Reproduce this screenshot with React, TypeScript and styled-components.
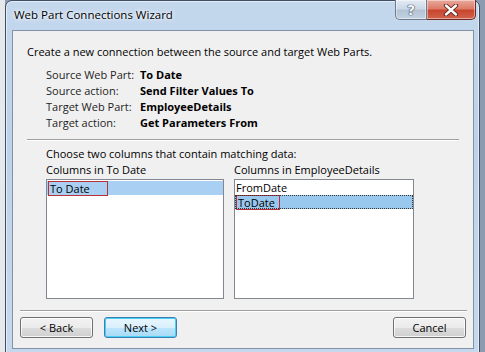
import React from "react";
import styled, { createGlobalStyle } from "styled-components";

const GlobalStyle = createGlobalStyle`
  html, body {
    margin: 0;
    padding: 0;
  }
  body {
    font-family: "Open Sans", "Noto Sans", sans-serif;
    font-size: 11px;
    color: #000;
  }
`;

const Desktop = styled.div`
  width: 485px;
  height: 352px;
  overflow: hidden;
  display: flex;
  padding-left: 5px;
  box-sizing: border-box;
  background: linear-gradient(to right, #e6e8ec 0, #e6e8ec 5px, #8c9bb0 5px, #8c9bb0 100%);
`;

const Window = styled.div`
  flex: none;
  width: 475px;
  height: 360px;
  box-sizing: border-box;
  display: flex;
  flex-direction: column;
  border: 1px solid #3f4f63;
  border-radius: 7px 7px 0 0;
  background: linear-gradient(180deg, #c3d7ed 0%, #bdd2ea 40%, #c6d8ec 100%);
  box-shadow: inset 0 0 0 1px rgba(255, 255, 255, 0.55);
`;

const TitleBar = styled.div`
  height: 29px;
  display: flex;
  align-items: flex-start;
`;

const TitleText = styled.div`
  padding: 6px 0 0 8px;
  font-size: 11.5px;
  line-height: 16px;
  color: #000;
  text-shadow: 0 0 6px #fff, 0 0 3px #fff;
`;

const CaptionGroup = styled.div`
  margin: -1px 3px 0 auto;
  display: flex;
  height: 20px;
`;

const CaptionButton = styled.div<{ $close?: boolean }>`
  width: ${(p) => (p.$close ? "49px" : "32px")};
  height: 20px;
  box-sizing: border-box;
  display: flex;
  align-items: center;
  justify-content: center;
  border: 1px solid ${(p) => (p.$close ? "#6e2a22" : "#6e7b8c")};
  border-top: none;
  border-left: ${(p) => (p.$close ? "none" : undefined)};
  border-radius: ${(p) => (p.$close ? "0 0 5px 0" : "0 0 0 5px")};
  background: ${(p) =>
    p.$close
      ? "linear-gradient(180deg, #e9a99c 0%, #dd7d6a 45%, #c8452e 55%, #d0634d 100%)"
      : "linear-gradient(180deg, #e3ebf4 0%, #ccd8e6 45%, #b3c3d6 55%, #c4d2e2 100%)"};
  box-shadow: inset 0 0 0 1px rgba(255, 255, 255, 0.45);
`;

const HelpGlyph = styled.span`
  font-family: "DejaVu Sans", sans-serif;
  font-size: 14px;
  font-weight: bold;
  line-height: 14px;
  color: #f4f6f9;
  text-shadow: 0 0 1px #3a4656, 0 0 1px #3a4656, 0 0 1px #3a4656;
`;

const Client = styled.div`
  flex: none;
  height: 319px;
  margin: 0 5px 0 6px;
  box-sizing: border-box;
  border: 1px solid #8392a5;
  background: #f0f0f0;
  display: flex;
  flex-direction: column;
`;

const Body = styled.div`
  padding: 13px 14px 0 14px;
  display: flex;
  flex-direction: column;
`;

const Line = styled.div<{ $indent?: boolean; $top?: number }>`
  line-height: 16px;
  white-space: nowrap;
  margin-left: ${(p) => (p.$indent ? "19px" : "0")};
  margin-top: ${(p) => p.$top ?? 0}px;
`;

const InfoGrid = styled.div`
  margin: 7px 0 0 19px;
  display: grid;
  grid-template-columns: 94px auto;
  line-height: 16px;
`;

const InfoLabel = styled.div`
  color: #1e1e1e;
`;

const InfoValue = styled.div`
  font-weight: bold;
`;

const Etched = styled.div<{ $top: number; $left?: number; $right?: number }>`
  margin-top: ${(p) => p.$top}px;
  margin-left: ${(p) => p.$left ?? 0}px;
  margin-right: ${(p) => p.$right ?? 0}px;
  height: 0;
  border-top: 1px solid #a0a0a0;
  border-bottom: 1px solid #fff;
`;

const ColumnsGrid = styled.div`
  margin-left: 19px;
  display: grid;
  grid-template-columns: 178px 180px;
  column-gap: 10px;
`;

const Column = styled.div`
  display: flex;
  flex-direction: column;
`;

const ListBox = styled.div`
  margin-top: 1px;
  height: 120px;
  box-sizing: border-box;
  border: 1px solid #828790;
  background: #fff;
  padding-top: 1px;
`;

const ListItem = styled.div<{ $selected?: boolean; $focused?: boolean }>`
  height: 14px;
  line-height: 14px;
  padding-left: 1px;
  box-sizing: border-box;
  white-space: nowrap;
  color: #000;
  background: ${(p) => (p.$selected ? (p.$focused ? "#99c8ef" : "#a9d0f2") : "transparent")};
  outline: ${(p) => (p.$focused ? "1px dotted #333" : "none")};
  outline-offset: -1px;
`;

const Marked = styled.span<{ $width: number }>`
  display: inline-block;
  width: ${(p) => p.$width}px;
  height: 15px;
  box-sizing: border-box;
  border: 1px solid #b8303a;
  padding-left: 1px;
  line-height: 13px;
  vertical-align: top;
`;

const ButtonRow = styled.div`
  margin-top: 5px;
  padding: 0 7px;
  display: flex;
  gap: 11px;
`;

const Button = styled.div<{ $default?: boolean; $push?: boolean }>`
  width: 73px;
  height: 21px;
  box-sizing: border-box;
  margin-left: ${(p) => (p.$push ? "auto" : "0")};
  display: flex;
  align-items: center;
  justify-content: center;
  font-size: 11px;
  color: #000;
  border-radius: 3px;
  border: 1px solid ${(p) => (p.$default ? "#3c7fb1" : "#707070")};
  background: ${(p) =>
    p.$default
      ? "linear-gradient(180deg, #eaf6fd 0%, #d9f0fc 50%, #bee6fd 50%, #a7d9f5 100%)"
      : "linear-gradient(180deg, #f2f2f2 0%, #ebebeb 50%, #dddddd 50%, #cfcfcf 100%)"};
  box-shadow: inset 0 0 0 1px ${(p) => (p.$default ? "#48cff8" : "rgba(255,255,255,0.8)")};
`;

const CloseIcon = () => (
  <svg width="16" height="12" viewBox="0 0 16 12">
    <path
      d="M3 1.5 L13 10.5 M13 1.5 L3 10.5"
      stroke="#5a1e16"
      strokeWidth="4.2"
      strokeLinecap="round"
    />
    <path
      d="M3 1.5 L13 10.5 M13 1.5 L3 10.5"
      stroke="#fff"
      strokeWidth="2.4"
      strokeLinecap="round"
    />
  </svg>
);

const info = [
  ["Source Web Part:", "To Date"],
  ["Source action:", "Send Filter Values To"],
  ["Target Web Part:", "EmployeeDetails"],
  ["Target action:", "Get Parameters From"],
];

export default function App() {
  return (
    <>
      <GlobalStyle />
      <Desktop>
        <Window>
          <TitleBar>
            <TitleText>Web Part Connections Wizard</TitleText>
            <CaptionGroup>
              <CaptionButton>
                <HelpGlyph>?</HelpGlyph>
              </CaptionButton>
              <CaptionButton $close>
                <CloseIcon />
              </CaptionButton>
            </CaptionGroup>
          </TitleBar>
          <Client>
            <Body>
              <Line>Create a new connection between the source and target Web Parts.</Line>
              <InfoGrid>
                {info.map(([label, value]) => (
                  <React.Fragment key={label}>
                    <InfoLabel>{label}</InfoLabel>
                    <InfoValue>{value}</InfoValue>
                  </React.Fragment>
                ))}
              </InfoGrid>
              <Etched $top={8} />
              <Line $indent $top={5}>
                Choose two columns that contain matching data:
              </Line>
              <ColumnsGrid>
                <Column>
                  <Line>Columns in To Date</Line>
                  <ListBox>
                    <ListItem $selected>
                      <Marked $width={60}>To Date</Marked>
                    </ListItem>
                  </ListBox>
                </Column>
                <Column>
                  <Line>Columns in EmployeeDetails</Line>
                  <ListBox>
                    <ListItem>FromDate</ListItem>
                    <ListItem $selected $focused>
                      <Marked $width={44}>ToDate</Marked>
                    </ListItem>
                  </ListBox>
                </Column>
              </ColumnsGrid>
            </Body>
            <Etched $top={11} $left={7} $right={6} />
            <ButtonRow>
              <Button>&lt; Back</Button>
              <Button $default>Next &gt;</Button>
              <Button $push>Cancel</Button>
            </ButtonRow>
          </Client>
        </Window>
      </Desktop>
    </>
  );
}
